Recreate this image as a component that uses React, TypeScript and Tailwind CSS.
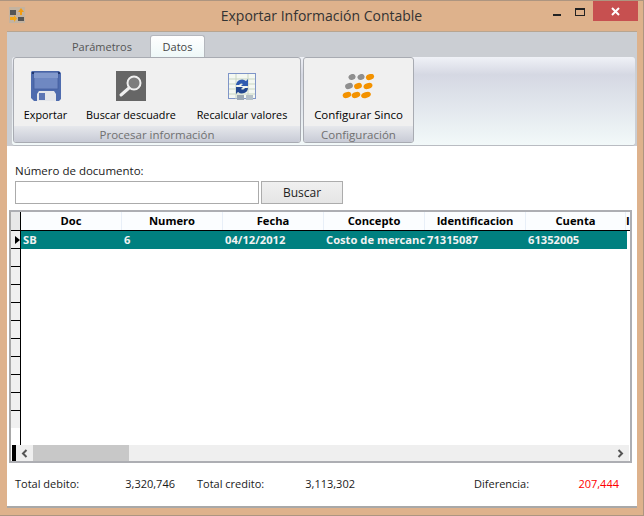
import React from "react";

const font = { ui: "font-['Open_Sans','Noto_Sans',sans-serif]" };

const COLUMNS = [
  { title: "Doc", value: "SB", width: "w-[101px]" },
  { title: "Numero", value: "6", width: "w-[101px]" },
  { title: "Fecha", value: "04/12/2012", width: "w-[101px]" },
  { title: "Concepto", value: "Costo de mercanc", width: "w-[101px]" },
  { title: "Identificacion", value: "71315087", width: "w-[101px]" },
  { title: "Cuenta", value: "61352005", width: "w-[100px]" },
];

function FloppyIcon() {
  return (
    <svg width="30" height="30" viewBox="0 0 30 30">
      <path d="M1 0h27l2 2v26l-2 2H3l-3-3V1z" fill="#4f6cae" />
      <rect x="3" y="1" width="24" height="17" fill="#6f88c2" stroke="#3f5a9a" strokeWidth="0.7" />
      <rect x="3" y="2" width="24" height="5" fill="#8299cc" />
      <rect x="1" y="1" width="2" height="2" fill="#22386f" />
      <rect x="27" y="1" width="2" height="2" fill="#22386f" />
      <path d="M6 30v-7l2-3h15l2 3v7z" fill="#e4e6ea" />
      <rect x="8" y="22" width="6" height="7" fill="#5c76b4" />
    </svg>
  );
}

function SearchIcon() {
  return (
    <svg width="30" height="30" viewBox="0 0 30 30">
      <rect width="30" height="30" fill="#666666" />
      <circle cx="18" cy="12" r="6.5" fill="#7d7d7d" stroke="#f0f0f0" strokeWidth="2" />
      <path d="M13 17l-8 7" stroke="#f0f0f0" strokeWidth="3" strokeLinecap="round" />
    </svg>
  );
}

function RecalcIcon() {
  return (
    <svg width="28" height="27" viewBox="0 0 28 27">
      <rect x="0.5" y="0.5" width="27" height="25" fill="#f4f8f2" stroke="#7f95c8" />
      <path d="M1 6h26M1 11h26M1 16h26M1 21h26M8 1v25M20 1v25" stroke="#c9d6c4" strokeWidth="1" />
      <rect x="9" y="22" width="7" height="5" fill="#9aa8b4" />
      <rect x="18" y="22" width="7" height="5" fill="#b4c0c8" />
      <path d="M8 12a6 6 0 0 1 10-4l2-2v7h-7l2-2a3 3 0 0 0-4 1z" fill="#2f5cb0" />
      <path d="M20 15a6 6 0 0 1-10 4l-2 2v-7h7l-2 2a3 3 0 0 0 4-1z" fill="#23488f" />
    </svg>
  );
}

function SincoIcon() {
  const dots = [
    [10, 3, 3.6, "#8f8f8f"], [19, 3, 3.6, "#8f8f8f"], [28, 3, 4.2, "#f39200"],
    [7, 12, 4, "#8f8f8f"], [16, 12, 4, "#f39200"], [26, 12, 4.6, "#f39200"],
    [5, 21, 4.4, "#f39200"], [14, 21, 4.4, "#f39200"], [24, 21, 5, "#f39200"],
  ] as const;
  return (
    <svg width="33" height="25" viewBox="0 0 33 25">
      {dots.map(([cx, cy, rx, fill]) => (
        <ellipse key={`${cx}-${cy}`} cx={cx} cy={cy} rx={rx} ry="2.9" fill={fill} transform={`rotate(-18 ${cx} ${cy})`} />
      ))}
    </svg>
  );
}

function AppIcon() {
  return (
    <svg width="16" height="16" viewBox="0 0 16 16">
      <rect width="16" height="16" fill="#c4b3a0" />
      <rect x="1" y="3" width="6" height="5" fill="#555555" />
      <path d="M9 5l3-4 3 4h-2v3h-2V5z" fill="#f39c12" />
      <path d="M1 10h4v-2l3 3.500-3 3.500v-2H1z" fill="#f5a818" />
      <rect x="9" y="10" width="6" height="4" fill="#555555" />
    </svg>
  );
}

function RibbonButton({ label, icon, className, textSize = "text-[10.8px]" }: { label: string; icon: React.ReactNode; className: string; textSize?: string }) {
  return (
    <div className={`flex flex-col items-center ${className}`}>
      <div className="h-[30px] flex items-center justify-center">{icon}</div>
      <span className={`mt-[6px] ${textSize} leading-4 text-black whitespace-nowrap`}>{label}</span>
    </div>
  );
}

function RibbonGroup({ title, width, children }: { title: string; width: string; children: React.ReactNode }) {
  return (
    <div className={`${width} h-[86px] flex flex-col bg-[#f0f0f0] border border-[#a8abb2] rounded-[3px] overflow-hidden`}>
      <div className="flex-1 flex items-start pt-[13px]">{children}</div>
      <div className="h-[16px] bg-gradient-to-b from-[#e6e8ec] to-[#c8cbd6] text-center text-[11.5px] leading-[17px] text-[#707070]">
        {title}
      </div>
    </div>
  );
}

export default function App() {
  return (
    <div className={`w-[644px] h-[516px] overflow-hidden bg-[#deb28c] border-t border-r border-b border-[#ad9580] flex flex-col ${font.ui}`}>
      <div className="h-[30px] grid grid-cols-[1fr_auto_1fr]">
        <div className="pl-[9px] pt-[6px]">
          <AppIcon />
        </div>
        <div className="pt-[4px] text-[14px] leading-[22px] text-[#333333]">Exportar Información Contable</div>
        <div className="flex justify-end items-start pr-[5px]">
          <div className="w-[8px] h-[2px] bg-[#222222] mt-[13px] mr-[14px]" />
          <div className="w-[10px] h-[8px] border border-t-2 border-[#222222] mt-[7px] mr-[8px]" />
          <div className="w-[45px] h-[20px] bg-[#c75050] flex items-center justify-center">
            <svg width="9" height="9" viewBox="0 0 9 9">
              <path d="M1 1l7 7M8 1l-7 7" stroke="#ffffff" strokeWidth="2" />
            </svg>
          </div>
        </div>
      </div>

      <div className="ml-[7px] w-[630px] h-[477px] border-t border-[#b8a590] border-b-2 border-b-[#a8a8a8] bg-white flex flex-col">
        <div className="bg-[#cbced3] h-[114px] shrink-0 pl-[5px] pr-[2px]">
          <div className="h-[25px] flex items-end pl-[59px]">
            <div className="w-[79px] h-[22px] pr-[17px] text-center text-[11px] leading-[23px] text-[#555555]">Parámetros</div>
            <div className="w-[55px] h-[22px] text-center text-[11px] leading-[21px] text-[#444444] bg-gradient-to-b from-[#ffffff] to-[#eef8f8] border border-b-0 border-[#b4b7bd] rounded-t-[3px]">
              Datos
            </div>
          </div>
          <div className="h-[89px] flex gap-[2px] pl-[1px] rounded-[3px] border-b border-[#b9bcc2] bg-gradient-to-b from-[#f0f2f7] from-0% via-[#d5d8e3] via-20% to-[#f2f9f9]">
            <RibbonGroup title="Procesar información" width="w-[288px]">
              <RibbonButton label="Exportar" icon={<FloppyIcon />} className="w-[63px]" />
              <RibbonButton label="Buscar descuadre" icon={<SearchIcon />} className="w-[108px]" />
              <RibbonButton label="Recalcular valores" icon={<RecalcIcon />} className="w-[114px]" />
            </RibbonGroup>
            <RibbonGroup title="Configuración" width="w-[111px]">
              <RibbonButton label="Configurar Sinco" icon={<SincoIcon />} className="w-full" textSize="text-[11.5px]" />
            </RibbonGroup>
          </div>
        </div>

        <div className="flex-1 flex flex-col pl-[2px] pr-[5px]">
          <div className="pl-[6px] mt-[17px] text-[11.5px] leading-4 text-[#1a1a1a]">Número de documento:</div>
          <div className="pl-[6px] mt-[2px] flex gap-[2px]">
            <div className="w-[244px] h-[23px] border border-[#ababab] bg-white" />
            <div className="w-[82px] h-[23px] border border-[#acacac] bg-gradient-to-b from-[#f0f0f0] to-[#e5e5e5] text-center text-[12px] leading-[21px] text-[#222222]">
              Buscar
            </div>
          </div>

          <div className="mt-[6px] h-[253px] border-2 border-[#adaeb3] border-l-[#a8a8a8] flex flex-col overflow-hidden">
            <div className="flex-1 flex min-h-0">
              <div className="w-[10px] shrink-0 flex flex-col border-r border-black">
                <div className="h-[18px] bg-[#e8e8e8]" />
                {Array.from({ length: 11 }).map((_, i) => (
                  <div key={i} className="h-[18px] border-t border-black bg-[#f0f0f0] flex items-center justify-end">
                    {i === 0 && (
                      <svg width="5" height="8" viewBox="0 0 5 8">
                        <path d="M0 0l5 4-5 4z" fill="#000000" />
                      </svg>
                    )}
                  </div>
                ))}
              </div>
              <div className="flex-1 min-w-0 flex flex-col overflow-hidden">
                <div className="h-[19px] shrink-0 flex border-b border-black bg-[#fbfdff]">
                  {COLUMNS.map((c) => (
                    <div key={c.title} className={`${c.width} shrink-0 text-center border-r border-[#e8eff8] text-[11.2px] font-bold leading-[18px] text-black`}>
                      {c.title}
                    </div>
                  ))}
                  <div className="flex-1 text-[11.2px] font-bold leading-[18px] text-black">I</div>
                </div>
                <div className="h-[18px] mr-[3px] shrink-0 flex bg-[#008080]">
                  {COLUMNS.map((c) => (
                    <div key={c.title} className={`${c.width} shrink-0 pl-[2px] text-[11.2px] font-bold leading-[18px] text-[#f2f2f2] whitespace-nowrap`}>
                      {c.value}
                    </div>
                  ))}
                </div>
              </div>
            </div>
            <div className="h-[16px] shrink-0 flex bg-[#efefef] ml-[1px] mr-[1px]">
              <div className="w-[4px] bg-black" />
              <div className="w-[17px] flex items-center justify-center">
                <svg width="7" height="9" viewBox="0 0 7 9">
                  <path d="M5.500 1L2 4.500 5.500 8" fill="none" stroke="#555555" strokeWidth="2" />
                </svg>
              </div>
              <div className="w-[96px] bg-[#c8c8c8]" />
              <div className="flex-1 flex items-center justify-end pr-[5px]">
                <svg width="7" height="9" viewBox="0 0 7 9">
                  <path d="M1.500 1L5 4.500 1.500 8" fill="none" stroke="#555555" strokeWidth="2" />
                </svg>
              </div>
            </div>
          </div>

          <div className="mt-[13px] pl-[6px] flex text-[11px] leading-4 text-[#1a1a1a]">
            <span className="w-[100px]">Total debito:</span>
            <span className="w-[60px] text-right">3,320,746</span>
            <span className="ml-[22px] w-[100px]">Total credito:</span>
            <span className="w-[58px] text-right">3,113,302</span>
            <span className="ml-[119px] w-[100px]">Diferencia:</span>
            <span className="w-[45px] text-right text-[#ff0000]">207,444</span>
          </div>
        </div>
      </div>
    </div>
  );
}
